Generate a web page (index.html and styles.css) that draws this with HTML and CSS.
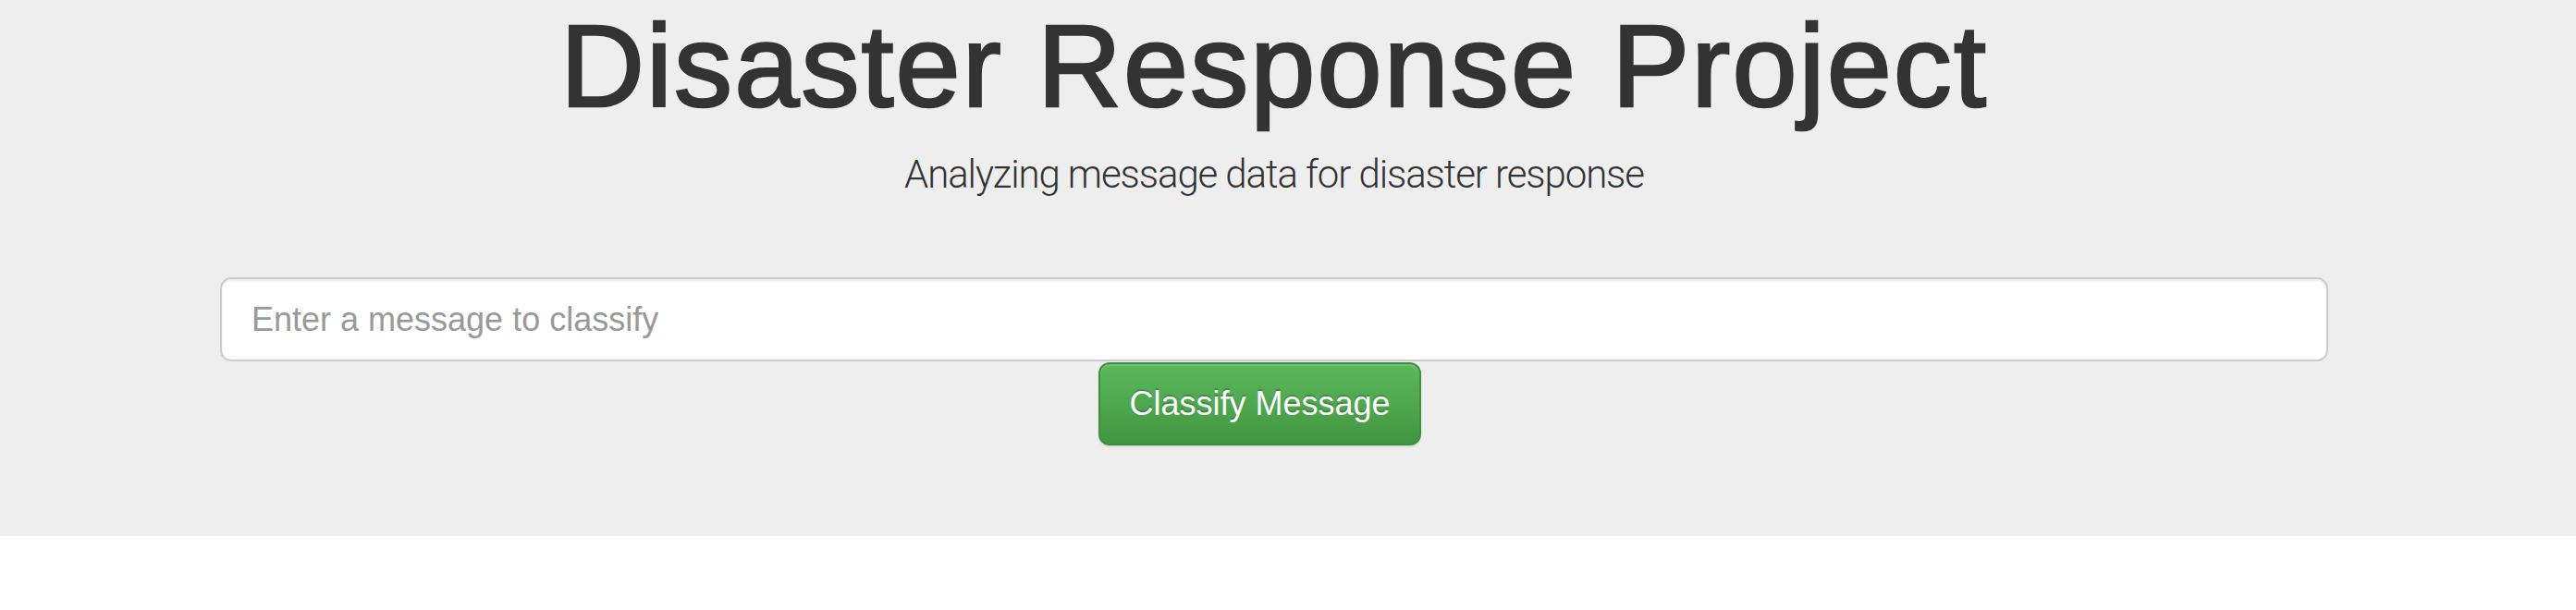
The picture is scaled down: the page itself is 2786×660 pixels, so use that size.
FILE: index.html
```html
<!DOCTYPE html>
<html lang="en">
<head>
<meta charset="utf-8">
<title>Disaster Response Project</title>
<link rel="stylesheet" href="styles.css">
</head>
<body>
<div class="jumbotron">
  <div class="container">
    <h1 class="title">Disaster Response Project</h1>
    <p class="subtitle">Analyzing message data for disaster response</p>
    <form class="classify-form" action="#">
      <input class="message-input" type="text" name="query" placeholder="Enter a message to classify">
      <div class="actions">
        <button type="button" class="btn-classify">Classify Message</button>
      </div>
    </form>
  </div>
</div>
</body>
</html>
```

FILE: styles.css
```css
html, body {
  margin: 0;
  padding: 0;
  background: #ffffff;
}

body {
  font-family: "Liberation Sans", Arial, sans-serif;
  color: #333333;
  padding-right: 30px;
}

.jumbotron {
  background: #eeeeee;
  height: 580px;
  margin-right: -30px;
  padding-right: 30px;
  box-sizing: border-box;
}

.container {
  width: 2280px;
  margin: 0 auto;
  display: flex;
  flex-direction: column;
  align-items: center;
}

.title {
  margin: 3px 0 0;
  font-size: 126px;
  line-height: 138px;
  font-weight: 400;
  letter-spacing: 2.1px;
  color: #333333;
  -webkit-text-stroke: 2.6px #333333;
  white-space: nowrap;
}

.subtitle {
  margin: 18px 0 0;
  font-family: Roboto, "Liberation Sans", sans-serif;
  font-weight: 300;
  font-size: 42px;
  line-height: 60px;
  letter-spacing: -1.1px;
  color: #333333;
}

.classify-form {
  align-self: stretch;
  margin-top: 81px;
  display: flex;
  flex-direction: column;
}

.message-input {
  box-sizing: border-box;
  width: 100%;
  height: 91px;
  padding: 20px 32px;
  font-family: "Liberation Sans", Arial, sans-serif;
  font-size: 36px;
  color: #555555;
  background: #ffffff;
  border: 2px solid #cccccc;
  border-radius: 12px;
  box-shadow: inset 0 2px 2px rgba(0, 0, 0, 0.075);
  outline: none;
}

.message-input::placeholder {
  color: #999999;
}

.actions {
  display: flex;
  justify-content: center;
  margin-top: 1px;
}

.btn-classify {
  box-sizing: border-box;
  width: 349px;
  height: 90px;
  margin-right: 31px;
  padding: 0;
  display: flex;
  align-items: center;
  justify-content: center;
  white-space: nowrap;
  font-family: "Liberation Sans", Arial, sans-serif;
  font-size: 36px;
  line-height: 1;
  color: #ffffff;
  background: linear-gradient(to bottom, #5cb85c 0%, #419641 100%);
  border: 2px solid #3e8f3e;
  border-radius: 12px;
  text-shadow: 0 -2px 0 rgba(0, 0, 0, 0.2);
  box-shadow: inset 0 2px 0 rgba(255, 255, 255, 0.15), 0 2px 2px rgba(0, 0, 0, 0.075);
  cursor: pointer;
}
```
